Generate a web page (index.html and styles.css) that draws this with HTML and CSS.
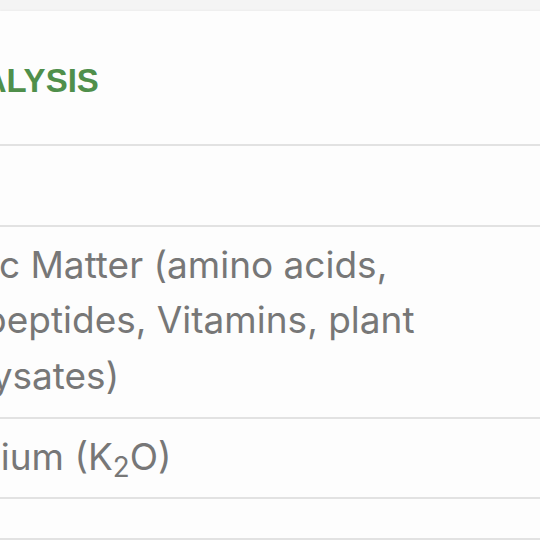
FILE: index.html
```html
<!DOCTYPE html>
<html lang="en">
<head>
<meta charset="utf-8">
<title>Analysis</title>
<link rel="stylesheet" href="styles.css">
</head>
<body>
<section class="card">
  <div class="card-head">
    <h2 class="title">ANALYSIS</h2>
  </div>
  <table class="analysis">
    <colgroup>
      <col class="col-name">
      <col class="col-value">
    </colgroup>
    <tbody>
      <tr class="first"><td class="name">&nbsp;</td><td class="value"></td></tr>
      <tr><td class="name tall">Organic Matter (amino acids, small peptides, Vitamins, plant hydrolysates)</td><td class="value"></td></tr>
      <tr><td class="name">Potassium (K<sub>2</sub>O)</td><td class="value"></td></tr>
      <tr class="spacer"><td class="name"></td><td class="value"></td></tr>
    </tbody>
  </table>
</section>
</body>
</html>
```

FILE: styles.css
```css
html, body {
  margin: 0;
  padding: 0;
  background: #f4f4f4;
  overflow: hidden;
}

.card {
  margin-top: 11px;
  background: #fdfdfd;
  box-shadow: 0 -1px 2px rgba(0,0,0,0.03);
  width: 900px;
}

.card-head {
  height: 133px;
  display: flex;
  align-items: center;
  border-bottom: 2px solid #e2e2e2;
}

.title {
  margin: 6px 0 0 -65px;
  font-family: "Liberation Sans", Arial, sans-serif;
  font-weight: bold;
  font-size: 33px;
  color: #4f8f4b;
}

.analysis {
  border-collapse: collapse;
  table-layout: fixed;
  margin-left: -130px;
  width: 1030px;
}

.col-name {
  width: 620px;
}

.name,
.value {
  font-family: Inter, "Noto Sans", sans-serif;
  font-size: 37px;
  line-height: 1.5;
  color: #777777;
  padding: 10px 13px 12px;
  border-bottom: 2px solid #e2e2e2;
  vertical-align: top;
}

.first td {
  padding-bottom: 13px;
}

.name.tall {
  padding-bottom: 14px;
}

.name sub {
  font-size: 0.75em;
  line-height: 0;
  vertical-align: -0.25em;
}

.spacer td {
  height: 41px;
  padding: 0;
  box-sizing: border-box;
}
```
